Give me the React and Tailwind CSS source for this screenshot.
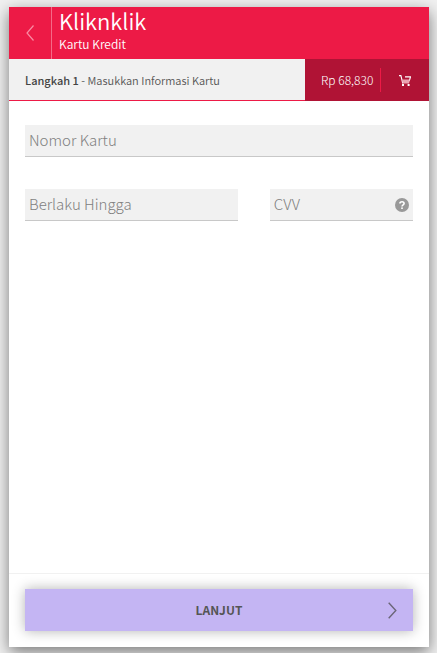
import React from "react";

function ChevronLeft() {
  return (
    <svg width="8" height="16" viewBox="0 0 8 16" fill="none" stroke="#f98ba3" strokeWidth="1.2" aria-hidden="true">
      <path d="M7.5 0.5 L1 8 L7.5 15.5" />
    </svg>
  );
}

function ChevronRight() {
  return (
    <svg width="9" height="17" viewBox="0 0 9 17" fill="none" stroke="#6b6678" strokeWidth="1.4" aria-hidden="true">
      <path d="M0.7 0.7 L7.8 8.5 L0.7 16.3" />
    </svg>
  );
}

function CartIcon() {
  return (
    <svg width="12" height="11" viewBox="0 0 12 11" fill="none" aria-hidden="true">
      <path d="M0 0.6 H1.9 L3.8 8.5" stroke="#fff" strokeWidth="1.1" />
      <path d="M6 1.9 H11.5 L10.2 6.2" stroke="#fff" strokeWidth="1.1" />
      <path d="M2.8 4.6 H10.8 L10 8.6 H3.8 Z" fill="#eba3b2" />
      <rect x="3" y="9" width="2" height="2" fill="#fff" />
      <rect x="8.6" y="9" width="2" height="2" fill="#fff" />
    </svg>
  );
}

function HelpIcon() {
  return (
    <svg width="14" height="14" viewBox="0 0 14 14" fill="none" aria-hidden="true">
      <circle cx="7" cy="7" r="7" fill="#999" />
      <path d="M4.9 5.4 C4.9 3.1 9.1 3.1 9.1 5.4 C9.1 6.8 7 6.8 7 8.5" stroke="#fff" strokeWidth="1.6" />
      <rect x="6.2" y="9.4" width="1.6" height="1.6" fill="#fff" />
    </svg>
  );
}

function Field({ id, label, extra }) {
  return (
    <input
      id={id}
      type="text"
      aria-label={label}
      placeholder={label}
      className={
        "block h-8 w-full rounded-none border-b border-[#c8c8c8] bg-[#f1f1f1] pb-0.5 pl-1 text-[15px] leading-5 font-light text-[#555] outline-none placeholder:text-[#808080] " +
        (extra || "pr-1")
      }
    />
  );
}

export default function App() {
  return (
    <div className="flex min-h-screen flex-col bg-[#f1f1f1] pt-[7px] pr-2 pb-[6px] pl-[9px] font-['Noto_Sans_CJK_SC','Noto_Sans',sans-serif]">
      <main className="flex grow flex-col bg-white shadow-[0_5px_15px_rgba(0,0,0,0.5)]">
        <header className="flex h-[52px] bg-[#ed1a46] text-white">
          <button type="button" aria-label="Kembali" className="flex w-[43px] items-center justify-center border-r border-[#f56a87]">
            <ChevronLeft />
          </button>
          <div className="pl-[7px]">
            <h1 className="text-[22px] leading-[26px] font-[350]">Kliknklik</h1>
            <p className="text-xs leading-[22px] font-[350]">Kartu Kredit</p>
          </div>
        </header>

        <div className="flex h-[42px] text-[#555]">
          <p className="flex grow items-center border-b border-[#ed1a46] bg-[#f1f1f1] pl-4 text-[11px] leading-4 font-[350] whitespace-pre">
            <b className="font-medium text-[#444]">Langkah 1</b> - Masukkan Informasi Kartu
          </p>
          <div className="flex w-[124px] items-center bg-[#b01335] pl-4 text-xs font-light text-white">
            <span className="grow whitespace-nowrap">Rp 68,830</span>
            <button type="button" aria-label="Keranjang" className="flex h-6 w-[49px] items-center justify-center border-l border-[#ed1a46]">
              <CartIcon />
            </button>
          </div>
        </div>

        <form id="card-form" className="flex grow flex-col gap-8 px-4 py-6">
          <Field id="nomor" label="Nomor Kartu" />
          <div className="flex gap-8">
            <div className="grow">
              <Field id="berlaku" label="Berlaku Hingga" />
            </div>
            <div className="relative w-[calc(40%-12px)]">
              <Field id="cvv" label="CVV" extra="pr-6" />
              <button type="button" aria-label="Bantuan CVV" className="absolute top-[9px] right-1">
                <HelpIcon />
              </button>
            </div>
          </div>
        </form>

        <footer className="border-t border-[#f1f1f1] px-4 pt-[15px] pb-4">
          <button
            type="submit"
            form="card-form"
            className="flex h-[42px] w-full items-center bg-[#c4b5f3] px-4 text-xs font-bold text-[#555] shadow-[0_0_12px_rgba(0,0,0,0.3)]"
          >
            <span className="grow pl-[9px] text-center">LANJUT</span>
            <ChevronRight />
          </button>
        </footer>
      </main>
    </div>
  );
}
